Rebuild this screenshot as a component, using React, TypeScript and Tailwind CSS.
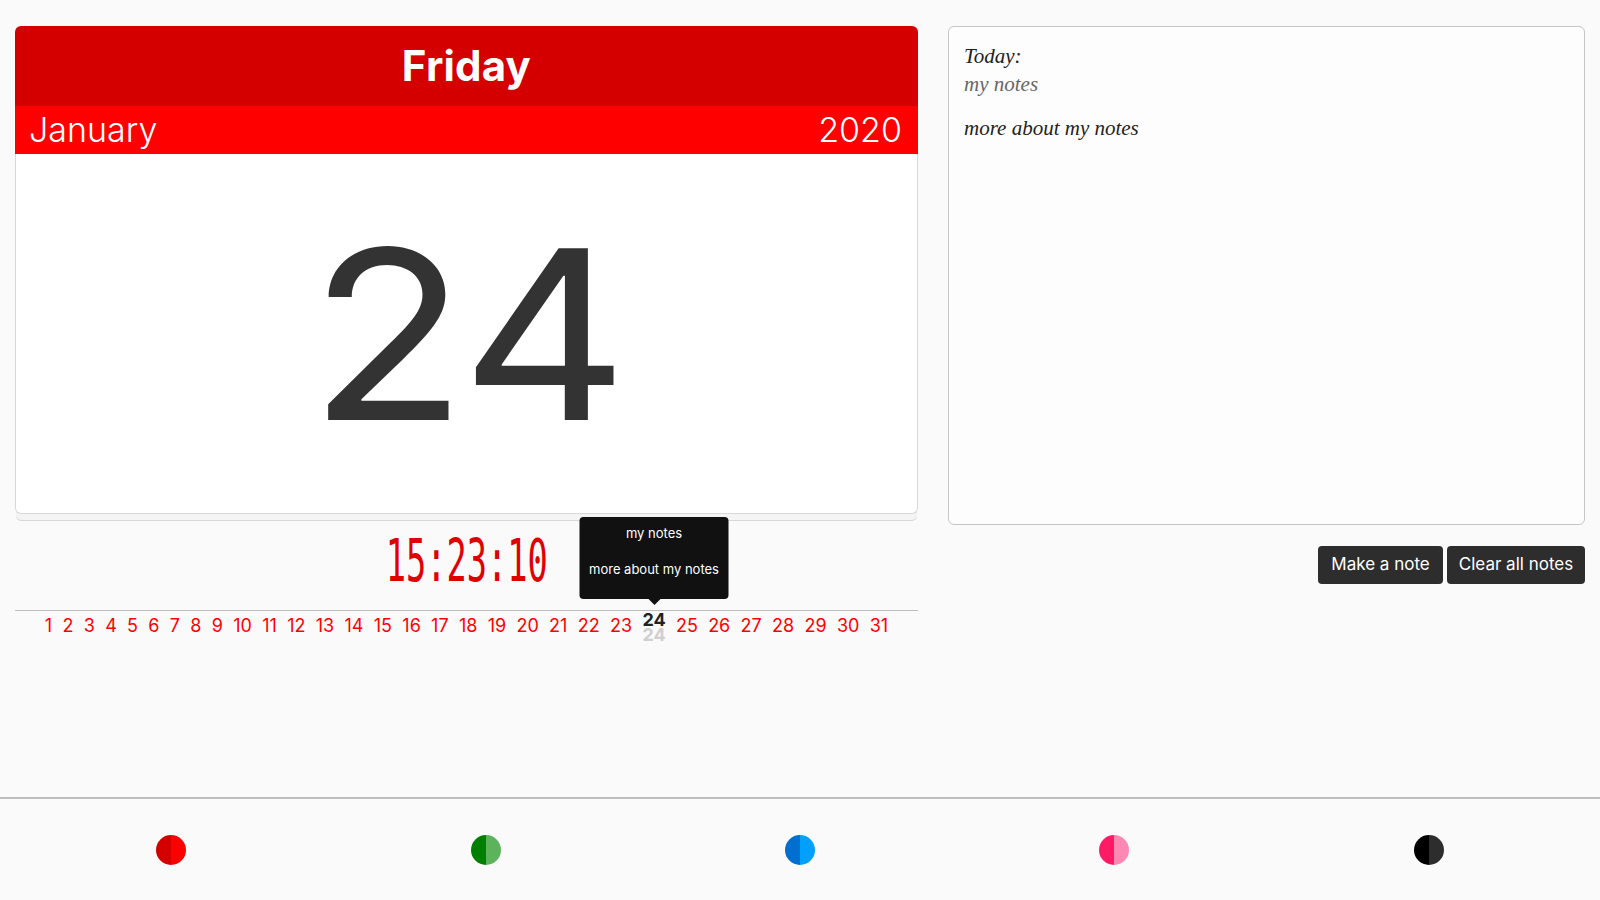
import React from "react";

const days = Array.from({ length: 31 }, (_, i) => i + 1);

const dots = [
  "bg-[linear-gradient(to_right,#d40000_50%,#ff0000_50%)]",
  "bg-[linear-gradient(to_right,#008000_50%,#5cb35c_50%)]",
  "bg-[linear-gradient(to_right,#006fd0_50%,#00a0ff_50%)]",
  "bg-[linear-gradient(to_right,#ff1a66_50%,#ff88b2_50%)]",
  "bg-[linear-gradient(to_right,#000000_50%,#2d2d2d_50%)]",
];

export default function App() {
  return (
    <div className="min-h-screen flex flex-col bg-[#fafafa] font-['Inter','Noto_Sans',sans-serif]">
      <div className="flex-1 flex pt-[26px]">
        {/* Left column */}
        <div className="w-[933px] px-[15px]">
          <div className="rounded-[6px] shadow-[0_7px_0_-1px_#f4f4f4,0_8px_0_-1px_#d8d8d8]">
            <div className="h-[80px] bg-[#d40000] rounded-t-[6px] flex items-center justify-center">
              <span className="text-white font-bold text-[42px] leading-none tracking-[0.2px]">Friday</span>
            </div>
            <div className="h-[48px] bg-[#ff0000] flex items-center justify-between pl-[14px] pr-[16px]">
              <span className="text-white font-light text-[34px] leading-none">January</span>
              <span className="text-white font-light text-[34px] leading-none">2020</span>
            </div>
            <div className="h-[360px] bg-white border border-t-0 border-[#d8d8d8] rounded-b-[6px] flex items-center justify-center">
              <span className="inline-block text-[#333333] text-[236px] leading-none tracking-[-2px] pl-[2px] scale-x-[1.1] origin-center font-normal">24</span>
            </div>
          </div>

          <div className="mt-[18px] h-[58px] flex justify-center">
            <span className="inline-block text-[#e00000] font-['DejaVu_Sans_Mono',monospace] text-[58px] leading-none scale-x-[0.58] origin-center whitespace-nowrap">
              15:23:10
            </span>
          </div>

          <div className="mt-[20px] border-t border-[#bdbdbd] pt-[3px] flex justify-center gap-x-[10.3px]">
            {days.map((d) =>
              d === 24 ? (
                <span key={d} className="relative text-[18px] leading-[24px]">
                  <span className="absolute left-0 top-[9px] text-[#cfcfcf] font-bold">24</span>
                  <span className="relative block -translate-y-[6px] font-bold text-[#222222]">24</span>
                  <span className="absolute left-1/2 -translate-x-1/2 bottom-[calc(100%+15px)] w-[149px] bg-[#111111] rounded-[4px] text-white text-[13px] leading-[18px] text-center pt-[7px] pb-[21px]">
                    my notes
                    <br />
                    <br />
                    more about my notes
                    <span className="absolute left-1/2 -translate-x-1/2 top-full w-0 h-0 border-l-[6px] border-r-[6px] border-t-[6px] border-l-transparent border-r-transparent border-t-[#111111]" />
                  </span>
                </span>
              ) : (
                <span key={d} className="text-[#ff0000] text-[18px] leading-[24px]">
                  {d}
                </span>
              )
            )}
          </div>
        </div>

        {/* Right column */}
        <div className="w-[667px] px-[15px]">
          <div className="h-[499px] bg-[#fdfdfd] border border-[#c6c6c6] rounded-[6px] pl-[15px] pt-[15px] font-['Liberation_Serif','DejaVu_Serif',serif] italic text-[21px] leading-[28px]">
            <div className="text-[#222222]">Today:</div>
            <div className="text-[#666666]">my notes</div>
            <div className="mt-[16px] text-[#222222]">more about my notes</div>
          </div>
          <div className="mt-[21px] flex justify-end gap-[4px]">
            <button className="w-[125px] h-[38px] bg-[#2d2d2d] rounded-[4px] text-white text-[17px]">Make a note</button>
            <button className="w-[138px] h-[38px] bg-[#2d2d2d] rounded-[4px] text-white text-[17px]">Clear all notes</button>
          </div>
        </div>
      </div>

      <footer className="h-[103px] border-t-2 border-[#bfbfbf] grid grid-cols-5 px-[14px] items-center">
        {dots.map((c, i) => (
          <div key={i} className="flex justify-center">
            <div className={`w-[30px] h-[30px] rounded-full ${c}`} />
          </div>
        ))}
      </footer>
    </div>
  );
}
